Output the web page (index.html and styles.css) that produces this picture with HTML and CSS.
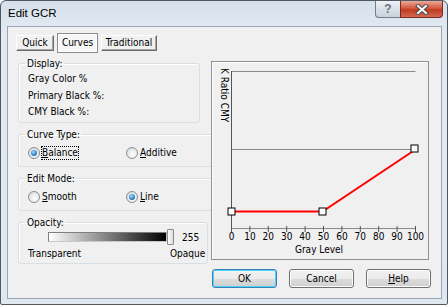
FILE: index.html
```html
<!DOCTYPE html>
<html lang="en">
<head>
    <meta charset="UTF-8">
    <title>Edit GCR</title>
    <link rel="stylesheet" href="styles.css">
</head>
<body>

    <div class="window">
        <!-- title bar -->
        <div class="titlebar">
            <span class="title">Edit GCR</span>
            <div class="caption">
                <span class="cap-btn cap-help">?</span>
                <span class="cap-btn cap-close">
                    <svg width="14" height="11" viewBox="0 0 14 11">
                        <path d="M3 2 L11 9 M11 2 L3 9" stroke="#4a4a4a" stroke-width="4" stroke-linecap="square"/>
                        <path d="M3 2 L11 9 M11 2 L3 9" stroke="#ffffff" stroke-width="2" stroke-linecap="square"/>
                    </svg>
                </span>
            </div>
        </div>

        <div class="client">
            <div class="tabs">
                <span class="tab quick">Quick</span>
                <span class="tab active">Curves</span>
                <span class="tab trad">Traditional</span>
            </div>

            <div class="body">
                <div class="left">
                    <fieldset class="group display">
                        <legend>Display:</legend>
                        <div class="row">Gray Color %</div>
                        <div class="row">Primary Black %:</div>
                        <div class="row">CMY Black %:</div>
                    </fieldset>

                    <fieldset class="group radios">
                        <legend>Curve Type:</legend>
                        <div class="radio-row">
                            <span class="opt"><span class="radio on"><span class="dot"></span></span><span class="focus"><u>B</u>alance</span></span>
                            <span class="opt"><span class="radio"></span><span><u>A</u>dditive</span></span>
                        </div>
                    </fieldset>

                    <fieldset class="group radios">
                        <legend>Edit Mode:</legend>
                        <div class="radio-row">
                            <span class="opt"><span class="radio"></span><span><u>S</u>mooth</span></span>
                            <span class="opt"><span class="radio on"><span class="dot"></span></span><span><u>L</u>ine</span></span>
                        </div>
                    </fieldset>

                    <fieldset class="group opacity">
                        <legend>Opacity:</legend>
                        <div class="slider-row">
                            <span class="track"></span>
                            <span class="thumb"></span>
                            <span class="value">255</span>
                        </div>
                        <div class="ends">
                            <span>Transparent</span>
                            <span>Opaque</span>
                        </div>
                    </fieldset>
                </div>

                <div class="right">
                    <div class="chart">
                        <svg width="216" height="197" viewBox="0 0 216 197">
                            <g stroke="#8a8a8a" stroke-width="1" fill="none">
                                <path d="M19 9.5 H203.5"/>
                                <path d="M19 87.5 H203.5"/>
                                <path d="M19 166.5 H203.5"/>
                            </g>
                            <path d="M19.5 9 V167" stroke="#555" stroke-width="1"/>
                            <g id="ticks" stroke="#555" stroke-width="1"></g>
                            <g id="labels"></g>
                            <text x="107" y="191" text-anchor="middle">Gray Level</text>
                            <text transform="translate(9 6) rotate(90)">K Ratio CMY</text>
                            <polyline points="19.5,149.5 110.5,149.5 203.5,87.5" fill="none" stroke="#ff0000" stroke-width="2"/>
                            <g fill="#fff" stroke="#000" stroke-width="1">
                                <rect x="16" y="146" width="7" height="7"/>
                                <rect x="107" y="146" width="7" height="7"/>
                                <rect x="199" y="83" width="7" height="7"/>
                            </g>
                        </svg>
                    </div>
                    <div class="buttons">
                        <span class="btn default">OK</span>
                        <span class="btn">Cancel</span>
                        <span class="btn"><u>H</u>elp</span>
                    </div>
                </div>
            </div>
        </div>
    </div>

    <script>
        // x axis ticks 0..100
        const ticks = document.getElementById('ticks');
        const labels = document.getElementById('labels');
        const ns = 'http://www.w3.org/2000/svg';
        for (let i = 0; i <= 10; i++) {
            const x = 19.5 + i * 18.4;
            const t = document.createElementNS(ns, 'path');
            t.setAttribute('d', 'M' + x.toFixed(1) + ' 164 V170');
            ticks.appendChild(t);
            const l = document.createElementNS(ns, 'text');
            l.setAttribute('x', x.toFixed(1));
            l.setAttribute('y', 178);
            l.setAttribute('text-anchor', 'middle');
            l.textContent = i * 10;
            labels.appendChild(l);
        }
    </script>

</body>
</html>
```

FILE: styles.css
```css
body {
    margin: 0;
    font-family: "DejaVu Sans Condensed", "DejaVu Sans", sans-serif;
    font-stretch: condensed;
    font-size: 10px;
    color: #000;
    background: #fff;
}

.window {
    width: 448px;
    height: 305px;
    box-sizing: border-box;
    border: 1px solid #505860;
    border-radius: 6px 6px 2px 2px;
    background: linear-gradient(#d6e0eb, #e2e9f1 30px, #dfe7f0);
    display: flex;
    flex-direction: column;
}

/* title bar */
.titlebar {
    height: 25px;
    display: flex;
    justify-content: space-between;
    align-items: flex-start;
}

.title {
    padding: 6px 0 0 7px;
    font-family: "Liberation Sans", Arial, sans-serif;
    font-stretch: normal;
    font-size: 11.5px;
    color: #000;
}

.caption {
    display: flex;
    margin-right: 4px;
}

.cap-btn {
    height: 17px;
    box-sizing: border-box;
    display: flex;
    align-items: center;
    justify-content: center;
    border: 1px solid #6f7c8c;
    border-top: none;
}

.cap-help {
    width: 25px;
    border-radius: 0 0 0 4px;
    border-right: none;
    background: linear-gradient(#eef2f6, #d9e0e8 50%, #c9d2dc);
    color: #6a737d;
    font-family: "Liberation Sans", Arial, sans-serif;
    font-weight: bold;
    font-size: 12px;
}

.cap-close {
    width: 43px;
    border-color: #7a2b20;
    border-radius: 0 0 4px 0;
    background: linear-gradient(#e9a99d, #d4593f 45%, #c23a22 55%, #d06a52);
}

/* client area */
.client {
    flex: 1;
    margin: 0 5px 5px 6px;
    border: 1px solid #9aa6b4;
    background: #f0f0f0;
}

.tabs {
    display: flex;
    align-items: center;
    gap: 3px;
    height: 20px;
    padding: 6px 0 0 8px;
}

.tab {
    height: 16px;
    box-sizing: border-box;
    text-align: center;
    line-height: 14px;
    border: 1px solid;
    border-color: #fff #6a6a6a #6a6a6a #fff;
    box-shadow: inset -1px -1px #a8a8a8;
    background: #f0f0f0;
}

.tab.quick {
    width: 38px;
}

.tab.trad {
    width: 56px;
}

.tab.active {
    width: 41px;
    height: 20px;
    line-height: 18px;
    border-color: #8c8c8c;
    box-shadow: inset 1px 1px #fff, inset -1px -1px #fff;
    background: #f7f7f7;
}

.body {
    display: flex;
    gap: 11px;
    padding: 4px 0 0 10px;
}

.left {
    width: 182px;
    display: flex;
    flex-direction: column;
    gap: 5px;
}

/* group boxes */
.group {
    margin: 0;
    padding: 0 8px;
    border: 1px solid #d5dfe5;
    border-radius: 3px;
    box-shadow: inset 1px 1px #fff;
}

.group legend {
    padding: 0 2px;
    margin-left: -2px;
    line-height: 13px;
}

.display {
    padding-top: 1px;
    padding-bottom: 1px;
}

.display .row {
    line-height: 16.5px;
    padding-left: 1px;
}

.radios {
    padding-top: 4px;
    padding-bottom: 5px;
}

.radio-row {
    display: flex;
    height: 16px;
    align-items: center;
}

.opt {
    width: 97px;
    display: flex;
    align-items: center;
    gap: 2px;
    padding-left: 1px;
}

.radio {
    width: 12px;
    height: 12px;
    box-sizing: border-box;
    border-radius: 50%;
    border: 1px solid #8b8e91;
    background: radial-gradient(circle at 60% 65%, #ffffff, #e6e6e6 60%, #cfcfcf);
    display: flex;
    align-items: center;
    justify-content: center;
}

.dot {
    width: 6px;
    height: 6px;
    border-radius: 50%;
    background: radial-gradient(circle at 40% 35%, #a8dcff, #2a7fc8 60%, #144a84);
}

.focus {
    outline: 1px dotted #000;
    outline-offset: 0;
    line-height: 12px;
}

.opacity {
    padding-bottom: 3px;
}

.slider-row {
    display: flex;
    align-items: center;
    height: 17px;
    padding-left: 21px;
}

.track {
    width: 119px;
    height: 10px;
    box-sizing: border-box;
    border: 1px solid #7e7e7e;
    border-bottom-color: #c8c8c8;
    border-right-color: #c8c8c8;
    background: linear-gradient(to right, #ffffff, #000000);
}

.thumb {
    width: 7px;
    height: 16px;
    box-sizing: border-box;
    border: 1px solid #8a8a8a;
    border-radius: 1px;
    background: linear-gradient(to right, #fdfdfd, #dcdcdc);
}

.value {
    margin-left: 8px;
}

.ends {
    display: flex;
    justify-content: space-between;
    line-height: 13px;
    padding: 1px 0 0 1px;
    margin-right: -6px;
}

/* chart */
.right {
    width: 218px;
    margin-top: 4px;
}

.chart {
    height: 199px;
    box-sizing: border-box;
    border: 1px solid #8f8f8f;
    box-shadow: inset 1px 1px #fff;
    background: #f0f0f0;
}

.chart svg {
    display: block;
}

.chart text {
    font-family: "DejaVu Sans Condensed", "DejaVu Sans", sans-serif;
    font-stretch: condensed;
    font-size: 10px;
    fill: #000;
}

.buttons {
    display: flex;
    gap: 12px;
    margin: 9px 0 0 1px;
}

.btn {
    width: 65px;
    height: 19px;
    box-sizing: border-box;
    flex-shrink: 0;
    border: 1px solid #707070;
    border-radius: 3px;
    background: linear-gradient(#f2f2f2, #ebebeb 50%, #dddddd 51%, #cfcfcf);
    box-shadow: inset 0 0 0 1px #fcfcfc;
    text-align: center;
    line-height: 17px;
}

.btn.default {
    border-color: #3c7fb1;
    box-shadow: inset 0 0 0 1px #48d4fc;
}
```
